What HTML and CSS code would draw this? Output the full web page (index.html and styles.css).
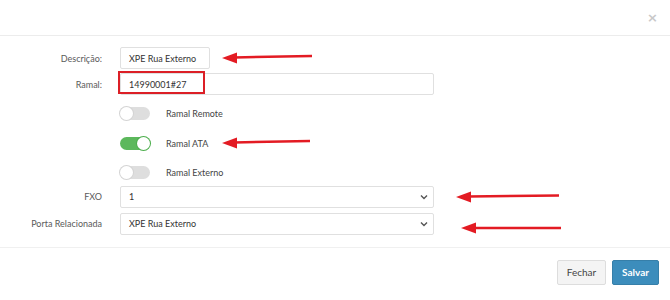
FILE: index.html
```html
<!DOCTYPE html>
<html lang="pt">
<head>
<meta charset="UTF-8">
<title>Editar Ramal</title>
<link rel="stylesheet" href="styles.css">
</head>
<body>
<div class="modal">
  <div class="modal-header">
    <span class="close">&times;</span>
  </div>

  <div class="modal-body">
    <div class="row">
      <label>Descrição:</label>
      <div class="field"><div class="input short">XPE Rua Externo</div></div>
    </div>
    <div class="row">
      <label>Ramal:</label>
      <div class="field marked"><div class="input wide">14990001#27</div><span class="red-box"></span></div>
    </div>

    <div class="toggles">
      <div class="toggle-row"><span class="switch"></span><span class="switch-label">Ramal Remote</span></div>
      <div class="toggle-row"><span class="switch on"></span><span class="switch-label">Ramal ATA</span></div>
      <div class="toggle-row"><span class="switch"></span><span class="switch-label">Ramal Externo</span></div>
    </div>

    <div class="row">
      <label>FXO</label>
      <div class="field">
        <div class="input wide select">1
          <svg width="8" height="6" viewBox="0 0 8 6"><path d="M1 1.5 L4 4.5 L7 1.5" fill="none" stroke="#555" stroke-width="1.4"/></svg>
        </div>
      </div>
    </div>
    <div class="row">
      <label>Porta Relacionada</label>
      <div class="field">
        <div class="input wide select">XPE Rua Externo
          <svg width="8" height="6" viewBox="0 0 8 6"><path d="M1 1.5 L4 4.5 L7 1.5" fill="none" stroke="#555" stroke-width="1.4"/></svg>
        </div>
      </div>
    </div>
  </div>

  <div class="modal-footer">
    <button class="btn btn-default">Fechar</button>
    <button class="btn btn-primary">Salvar</button>
  </div>
</div>

<!-- annotation arrows drawn over the screenshot -->
<svg class="arrows" width="670" height="300" viewBox="0 0 670 300">
  <g fill="#e31b23" stroke="#e31b23">
    <line x1="234" y1="57.5" x2="312" y2="56" stroke-width="2.5"/>
    <polygon points="222,58 237,52.5 237,63.5" stroke="none"/>

    <line x1="234" y1="142.5" x2="310" y2="141" stroke-width="2.5"/>
    <polygon points="222,143 237,137.5 237,148.5" stroke="none"/>

    <line x1="468" y1="196.5" x2="559" y2="195.5" stroke-width="2.5"/>
    <polygon points="456,197 471,191.5 471,202.5" stroke="none"/>

    <line x1="473" y1="228" x2="561" y2="228" stroke-width="2.5"/>
    <polygon points="461,228 476,222.5 476,233.5" stroke="none"/>
  </g>
</svg>
</body>
</html>
```

FILE: styles.css
```css
body {
  margin: 0;
  padding: 0;
  background: #fff;
  font-family: Lato, "Liberation Sans", sans-serif;
  font-size: 9px;
  color: #333;
}

.modal {
  width: 670px;
  height: 300px;
}

.modal-header {
  height: 36px;
  border-bottom: 1px solid #ececec;
  display: flex;
  justify-content: flex-end;
  align-items: center;
  padding-right: 12px;
  box-sizing: border-box;
}

.close {
  font-family: "DejaVu Sans", sans-serif;
  font-size: 13px;
  font-weight: bold;
  color: #c8c8c8;
  line-height: 1;
}

.modal-body {
  padding: 11px 0 12px 0;
  border-bottom: 1px solid #f0f0f0;
}

.row {
  display: grid;
  grid-template-columns: 102px auto;
  column-gap: 18px;
  align-items: center;
  margin-bottom: 4px;
}

.row:last-child {
  margin-top: 5px;
  margin-bottom: 0;
}

.row label {
  text-align: right;
  color: #5a5a5a;
}

.field {
  position: relative;
  display: flex;
}

.input {
  height: 22px;
  box-sizing: border-box;
  border: 1px solid #e0e0e0;
  border-radius: 2px;
  padding: 0 8px;
  display: flex;
  align-items: center;
  color: #333;
}

.input.short {
  width: 90px;
}

.input.wide {
  width: 314px;
}

.select {
  justify-content: space-between;
  padding-right: 5px;
}

.red-box {
  position: absolute;
  left: -2px;
  top: -2px;
  width: 87px;
  height: 23px;
  border: 2px solid #dc1f26;
  box-sizing: border-box;
}

.toggles {
  margin: 3px 0 -2px 120px;
}

.toggle-row {
  height: 29.5px;
  display: flex;
  align-items: center;
}

.switch {
  width: 30px;
  height: 13px;
  border-radius: 7px;
  background: #dedede;
  position: relative;
  margin-right: 16px;
}

.switch::after {
  content: "";
  position: absolute;
  top: 0;
  left: 0;
  width: 13px;
  height: 13px;
  border-radius: 50%;
  background: #fff;
  box-shadow: 0 0 0 1px #d4d4d4;
}

.switch.on {
  background: #5cb85c;
}

.switch.on::after {
  left: 17px;
  box-shadow: 0 0 0 1px #4cae4c;
}

.switch-label {
  color: #444;
}

.modal-footer {
  display: flex;
  justify-content: flex-end;
  gap: 6px;
  padding: 12px 11px 0 0;
}

.btn {
  height: 25px;
  padding: 0 8px;
  font-family: Lato, "Liberation Sans", sans-serif;
  font-size: 10px;
  border-radius: 2px;
  cursor: pointer;
}

.btn-default {
  width: 49px;
  background: #f4f4f4;
  border: 1px solid #ddd;
  color: #444;
}

.btn-primary {
  width: 47px;
  background: #3c8dbc;
  border: 1px solid #367fa9;
  color: #fff;
  font-weight: bold;
}

.arrows {
  position: absolute;
  left: 0;
  top: 0;
  pointer-events: none;
}
```
